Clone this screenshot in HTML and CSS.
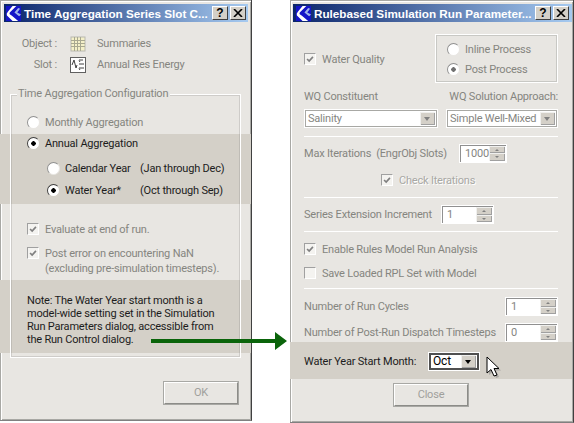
FILE: index.html
```html
<!DOCTYPE html>
<html lang="en">
<head>
  <meta charset="UTF-8">
  <title>Time Aggregation and Run Parameters</title>
  <link rel="stylesheet" href="styles.css">
</head>
<body>
  <div class="desktop">

    <!-- left dialog -->
    <div class="dialog dialog-left">
      <div class="titlebar">
        <svg class="logo" viewBox="0 0 16 16"><rect width="16" height="16" fill="#1414c8"/><path d="M11 0 L4 7 Q3 9 6 10 L13 16 L7 16 L1 10 Q0 8 2 6 L7 0 Z" fill="#fff"/><path d="M13 2 L9 7 L14 11 L16 9 L12 7 L15 3 Z" fill="#9fb4e8"/></svg>
        <span class="title-text">Time Aggregation Series Slot C...</span>
        <span class="title-btn">?</span>
        <span class="title-btn close-btn"><svg viewBox="0 0 10 8"><path d="M1 0 L9 8 M9 0 L1 8" stroke="#000" stroke-width="1.6"/></svg></span>
      </div>
      <div class="info">
        <div class="info-row">
          <span class="info-label">Object :</span>
          <svg class="info-icon" viewBox="0 0 16 16"><rect x="1" y="1" width="14" height="14" fill="#f4f0c8" stroke="#b8b8b0"/><path d="M1 4.5H15M1 7.5H15M1 10.5H15M4.5 1V15M7.5 1V15M10.5 1V15" stroke="#a8a890" fill="none"/></svg>
          <span>Summaries</span>
        </div>
        <div class="info-row">
          <span class="info-label">Slot :</span>
          <svg class="info-icon" viewBox="0 0 16 16"><rect x="0.5" y="0.5" width="15" height="15" fill="#fff" stroke="#606060"/><path d="M2 8 L4 3 L6 11 L7 8M13 3H9M10 5 L9 3.5M14 11H9M10 13 L9 11.5M14 7H9" stroke="#404040" fill="none"/></svg>
          <span>Annual Res Energy</span>
        </div>
      </div>

      <div class="group">
        <span class="legend">Time Aggregation Configuration</span>
        <label class="opt opt-first"><span class="radio"></span>Monthly Aggregation</label>
        <div class="band band-year">
          <label class="opt"><span class="radio radio-on"></span>Annual Aggregation</label>
          <label class="opt opt-sub opt-calendar"><span class="radio"></span><span class="year-name">Calendar Year</span>(Jan through Dec)</label>
          <label class="opt opt-sub opt-water"><span class="radio radio-on"></span><span class="year-name">Water Year*</span>(Oct through Sep)</label>
        </div>
        <label class="opt opt-evaluate">
          <span class="check"><svg viewBox="0 0 12 12"><path d="M2.5 6 L5 8.5 L9.5 3.5" class="tick"/></svg></span>Evaluate at end of run.
        </label>
        <label class="opt opt-post">
          <span class="check"><svg viewBox="0 0 12 12"><path d="M2.5 6 L5 8.5 L9.5 3.5" class="tick"/></svg></span>Post error on encountering NaN
        </label>
        <div class="opt-more">(excluding pre-simulation timesteps).</div>
        <div class="band band-note">
          <p>Note: The Water Year start month is a</p>
          <p>model-wide setting set in the Simulation</p>
          <p>Run Parameters dialog, accessible from</p>
          <p>the Run Control dialog.</p>
        </div>
      </div>

      <div class="actions actions-left"><span class="btn btn-ok">OK</span></div>
    </div>

    <!-- right dialog -->
    <div class="dialog dialog-right">
      <div class="titlebar">
        <svg class="logo" viewBox="0 0 16 16"><rect width="16" height="16" fill="#1414c8"/><path d="M11 0 L4 7 Q3 9 6 10 L13 16 L7 16 L1 10 Q0 8 2 6 L7 0 Z" fill="#fff"/><path d="M13 2 L9 7 L14 11 L16 9 L12 7 L15 3 Z" fill="#9fb4e8"/></svg>
        <span class="title-text">Rulebased Simulation Run Parameter...</span>
        <span class="title-btn">?</span>
        <span class="title-btn close-btn"><svg viewBox="0 0 10 8"><path d="M1 0 L9 8 M9 0 L1 8" stroke="#000" stroke-width="1.6"/></svg></span>
      </div>
      <div class="content">
        <div class="wq-top">
          <label class="opt opt-wq">
            <span class="check"><svg viewBox="0 0 12 12"><path d="M2.5 6 L5 8.5 L9.5 3.5" class="tick"/></svg></span>Water Quality
          </label>
          <div class="process">
            <label class="opt"><span class="radio"></span>Inline Process</label>
            <label class="opt"><span class="radio radio-on radio-dim"></span>Post Process</label>
          </div>
        </div>
        <div class="wq-labels"><span>WQ Constituent</span><span>WQ Solution Approach:</span></div>
        <div class="wq-combos">
          <div class="combo combo-a"><span class="combo-value">Salinity</span><span class="combo-btn"></span></div>
          <div class="combo combo-b"><span class="combo-value">Simple Well-Mixed</span><span class="combo-btn"></span></div>
        </div>
        <div class="sep sep-a"></div>
        <div class="field field-max">
          <span class="field-label">Max Iterations&nbsp; (EngrObj Slots)</span>
          <div class="spin spin-max"><span class="spin-value">1000</span><span class="spin-btns"><i class="up"></i><i class="down"></i></span></div>
        </div>
        <label class="opt opt-iter">
          <span class="check"><svg viewBox="0 0 12 12"><path d="M2.5 6 L5 8.5 L9.5 3.5" class="tick"/></svg></span>Check Iterations
        </label>
        <div class="sep sep-b"></div>
        <div class="field field-series">
          <span class="field-label">Series Extension Increment</span>
          <div class="spin spin-series"><span class="spin-value">1</span><span class="spin-btns"><i class="up"></i><i class="down"></i></span></div>
        </div>
        <div class="sep sep-c"></div>
        <label class="opt opt-rules">
          <span class="check"><svg viewBox="0 0 12 12"><path d="M2.5 6 L5 8.5 L9.5 3.5" class="tick"/></svg></span>Enable Rules Model Run Analysis
        </label>
        <label class="opt opt-save"><span class="check"></span>Save Loaded RPL Set with Model</label>
        <div class="sep sep-d"></div>
        <div class="field field-between field-cycles">
          <span>Number of Run Cycles</span>
          <div class="spin spin-end"><span class="spin-value">1</span><span class="spin-btns"><i class="up"></i><i class="down"></i></span></div>
        </div>
        <div class="field field-between field-dispatch">
          <span>Number of Post-Run Dispatch Timesteps</span>
          <div class="spin spin-end"><span class="spin-value">0</span><span class="spin-btns"><i class="up"></i><i class="down"></i></span></div>
        </div>
        <div class="band band-month">
          <span class="month-label">Water Year Start Month:</span>
          <div class="combo combo-month"><span class="combo-value">Oct</span><span class="combo-btn"></span></div>
        </div>
        <div class="actions"><span class="btn btn-close">Close</span></div>
      </div>
    </div>

    <!-- green arrow between the two dialogs -->
    <svg class="arrow" viewBox="0 0 136 18"><path d="M0 7 H124 V0 L136 9 L124 18 V11 H0 Z" fill="#0a640a"/></svg>

    <svg class="cursor" viewBox="0 0 16 24"><path d="M3 3 V19 L7 15.5 L10 22 L13 21 L10 14.5 L15 14.5 Z" fill="#808080" opacity="0.5"/><path d="M1 1 V17 L5 13.5 L8 20 L11 19 L8 12.5 L13 12.5 Z" fill="#fff" stroke="#000"/></svg>
  </div>
</body>
</html>
```

FILE: styles.css
```css
html, body {
  margin: 0;
  background: #fff;
}
.desktop {
  position: relative;
  display: flex;
  width: 574px;
  height: 423px;
  overflow: hidden;
  font-family: Roboto, sans-serif;
  font-size: 11px;
  letter-spacing: -0.2px;
  color: #85857f;
}
.dialog {
  box-sizing: border-box;
  background: #e8e6e2;
  border-right: 1px solid #404040;
  border-bottom: 1px solid #808080;
  box-shadow: inset 1px 1px #a8a8a4, inset 2px 2px #fff, inset -1px -1px #a8a8a4;
}
.dialog-left {
  width: 252px;
  height: 421px;
}
.dialog-right {
  width: 284px;
  height: 423px;
  margin-left: 38px;
}

/* title bar */
.titlebar {
  display: flex;
  align-items: center;
  height: 18px;
  margin: 4px 3px 0 4px;
  padding: 0 2px;
  gap: 2px;
  background: linear-gradient(to right, #0a246a, #a6caf0);
  color: #fff;
  font-family: "Liberation Sans", sans-serif;
  font-weight: bold;
  font-size: 11.7px;
  letter-spacing: 0;
}
.dialog-right .titlebar {
  margin: 4px 1px 0 3px;
  padding: 0 3px 0 3px;
}
.logo {
  width: 15px;
  height: 15px;
  flex: none;
}
.title-text {
  flex: 1;
  margin-left: 1px;
  white-space: nowrap;
}
.title-btn {
  box-sizing: border-box;
  display: flex;
  align-items: center;
  justify-content: center;
  width: 16px;
  height: 14px;
  flex: none;
  background: #d4d0c8;
  border: 1px solid;
  border-color: #fff #404040 #404040 #fff;
  color: #000;
  font-size: 12px;
}
.close-btn svg {
  width: 10px;
  height: 8px;
}

/* object / slot rows */
.info {
  margin-top: 11px;
}
.info-row {
  display: flex;
  align-items: center;
  height: 21px;
}
.info-label {
  width: 57px;
  text-align: right;
  margin-right: 13px;
}
.info-icon {
  width: 16px;
  height: 16px;
  margin-right: 11px;
}

/* group box */
.group {
  position: relative;
  margin: 19px 10px 0;
  height: 264px;
  box-sizing: border-box;
  padding-top: 18px;
}
.group::after {
  content: "";
  position: absolute;
  inset: 0;
  border: 1px solid #fff;
  box-shadow: inset 0 0 0 1px rgba(128, 128, 128, 0.25);
}
.legend {
  position: absolute;
  top: -7px;
  left: 7px;
  z-index: 1;
  padding: 0 2px 0 1px;
  background: #e8e6e2;
  line-height: 14px;
}
.opt {
  display: flex;
  align-items: center;
  height: 18px;
  white-space: nowrap;
}
.group > .opt,
.band-year > .opt {
  padding-left: 17px;
}
.opt-first {
  height: 20px;
}
.band {
  background: #d4d0c8;
  color: #1c1c1c;
}
.band-year {
  margin: 2px -10px 0;
  height: 70px;
  padding-left: 10px;
  box-sizing: border-box;
}
.band-year > .opt-sub {
  padding-left: 37px;
}
.opt-calendar {
  margin-top: 7px;
}
.opt-water {
  margin-top: 4px;
}
.year-name {
  width: 75px;
}
.opt-evaluate {
  margin-top: 16px;
}
.opt-post {
  margin-top: 6px;
}
.opt-more {
  height: 14px;
  line-height: 14px;
  padding-left: 35px;
  white-space: nowrap;
}
.band-note {
  margin: 4px -10px 0;
  height: 73px;
  box-sizing: border-box;
  padding: 14px 0 0 27px;
}
.band-note p {
  margin: 0;
  line-height: 13px;
  white-space: nowrap;
}

/* radios and checks */
.radio {
  box-sizing: border-box;
  width: 13px;
  height: 13px;
  flex: none;
  margin-right: 5px;
  border: 1px solid;
  border-color: #909090 #e8e6e2 #e8e6e2 #909090;
  border-radius: 50%;
  background: #fff;
}
.radio-on {
  background: radial-gradient(circle, #000 0 2px, #fff 2.5px);
  border-color: #404040 #d4d0c8 #d4d0c8 #404040;
}
.radio-dim {
  background: radial-gradient(circle, #707070 0 2px, #fff 2.5px);
  border-color: #909090 #e8e6e2 #e8e6e2 #909090;
}
.check {
  box-sizing: border-box;
  width: 12px;
  height: 12px;
  flex: none;
  margin-right: 6px;
  border: 1px solid;
  border-color: #a0a0a0 #fff #fff #a0a0a0;
  background: #f4f3f0;
}
.check svg {
  display: block;
  width: 10px;
  height: 10px;
}
.tick {
  fill: none;
  stroke: #808080;
  stroke-width: 2;
}

/* buttons */
.actions {
  display: flex;
  justify-content: center;
}
.actions-left {
  justify-content: flex-end;
  margin-top: 23px;
  padding-right: 12px;
}
.btn {
  box-sizing: border-box;
  width: 76px;
  height: 24px;
  line-height: 20px;
  border: 2px solid;
  border-color: #fff #8c8c88 #8c8c88 #fff;
  outline: 1px solid #a8a8a4;
  outline-offset: -1px;
  text-align: center;
  color: #a0a09c;
}
.btn-close {
  margin-top: 4px;
}

/* right dialog content */
.content {
  padding: 0 15px 0 14px;
}
.wq-top {
  display: flex;
  justify-content: space-between;
  align-items: center;
  margin-top: 12px;
}
.opt-wq {
  margin-top: 1px;
}
.process {
  box-sizing: border-box;
  width: 123px;
  height: 49px;
  padding: 4px 0 0 11px;
  border: 1px solid #fff;
  outline: 1px solid #c8c8c4;
  outline-offset: -2px;
}
.process .opt {
  height: 20px;
}
.wq-labels {
  display: flex;
  justify-content: space-between;
  margin-top: 7px;
  height: 14px;
  line-height: 14px;
}
.wq-combos {
  display: flex;
  justify-content: space-between;
  margin-top: 5px;
}
.combo {
  box-sizing: border-box;
  display: flex;
  align-items: center;
  height: 19px;
  border: 1px solid #fff;
  background: #fff;
  box-shadow: inset 0 0 0 1px #a8a8a4;
  padding: 2px;
}
.combo-a {
  width: 134px;
}
.combo-b {
  width: 112px;
}
.combo-value {
  flex: 1;
  white-space: nowrap;
  padding-left: 1px;
}
.combo-btn {
  position: relative;
  width: 15px;
  height: 13px;
  flex: none;
  background: #d4d0c8;
  box-shadow: inset 1px 1px #f0f0ee, inset -1px -1px #a0a0a0;
}
.combo-btn::after {
  content: "";
  position: absolute;
  top: 5px;
  left: 4px;
  border: 3.5px solid transparent;
  border-top: 4px solid #808080;
  border-bottom: 0;
}
.sep {
  height: 1px;
  background: #fff;
}
.sep-a {
  margin-top: 8px;
}
.sep-b {
  margin-top: 9px;
}
.sep-c {
  margin-top: 7px;
}
.sep-d {
  margin-top: 7px;
}
.field {
  display: flex;
  align-items: center;
  height: 19px;
  white-space: nowrap;
}
.field-between {
  justify-content: space-between;
}
.field-max {
  margin-top: 6px;
  height: 20px;
}
.field-max .field-label {
  width: 155px;
}
.field-series {
  margin-top: 7px;
}
.field-series .field-label {
  width: 137px;
}
.field-cycles {
  margin-top: 8px;
}
.field-dispatch {
  margin-top: 7px;
}
.spin {
  box-sizing: border-box;
  display: flex;
  height: 19px;
  background: #fff;
  border: 1px solid #fff;
  box-shadow: inset 1px 1px #909090;
  padding: 1px;
}
.spin-max {
  width: 48px;
}
.spin-series,
.spin-end {
  width: 53px;
}
.spin-value {
  flex: 1;
  padding-left: 4px;
  line-height: 16px;
}
.spin-btns {
  display: flex;
  flex-direction: column;
  width: 16px;
  flex: none;
}
.spin-btns i {
  position: relative;
  flex: 1;
  background: #d4d0c8;
  box-shadow: inset 1px 1px #f0f0ee, inset -1px -1px #a0a0a0;
}
.spin-btns i::after {
  content: "";
  position: absolute;
  top: 3px;
  left: 6px;
  border: 2px solid transparent;
  border-top: 0;
  border-bottom: 2px solid #808080;
}
.spin-btns .down::after {
  border-bottom: 0;
  border-top: 2px solid #808080;
}
.opt-iter {
  height: 16px;
  margin-top: 9px;
  padding-left: 77px;
  color: #a8a8a4;
  text-shadow: 1px 1px #fff;
}
.opt-rules {
  height: 16px;
  margin-top: 9px;
}
.opt-save {
  height: 16px;
  margin-top: 8px;
}
.band-month {
  display: flex;
  align-items: center;
  height: 37px;
  box-sizing: border-box;
  margin: 0 -14px;
  padding: 1px 0 0 14px;
}
.month-label {
  width: 124px;
  white-space: nowrap;
}
.combo-month {
  width: 52px;
  color: #000;
  font-size: 12px;
  border: 1px solid #fff;
  box-shadow: inset 0 0 0 2px #505050;
  padding: 2px 3px;
}
.combo-month .combo-btn::after {
  border-top-color: #000;
}

/* overlays on the screenshot */
.arrow {
  position: absolute;
  left: 151px;
  top: 332px;
  width: 136px;
  height: 18px;
}
.cursor {
  position: absolute;
  left: 486px;
  top: 356px;
  width: 16px;
  height: 24px;
}
```
